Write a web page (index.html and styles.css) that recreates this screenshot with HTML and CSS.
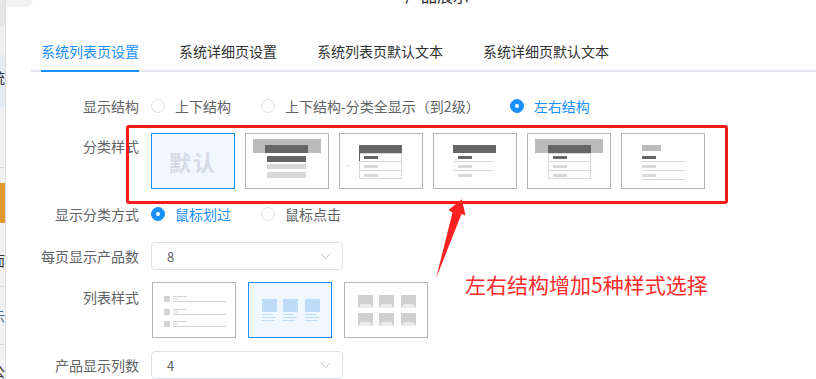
FILE: index.html
```html
<!DOCTYPE html>
<html lang="zh-CN">
<head>
<meta charset="utf-8">
<title>产品展示</title>
<link rel="stylesheet" href="styles.css">
</head>
<body>
<div class="app">
  <aside class="sidebar">
    <div class="sb sb-a"></div>
    <div class="sb sb-b"></div>
    <div class="sb sb-c"><span>系统</span></div>
    <div class="sb sb-d"></div>
    <div class="sb sb-e"></div>
    <div class="sb sb-f"></div>
    <div class="sb sb-g"><span>界面</span></div>
    <div class="sb sb-h"><span>展示</span></div>
    <div class="sb sb-i"><span>公</span></div>
  </aside>

  <main class="main">
    <header class="head">
      <div class="corner"></div>
      <div class="title">产品展示</div>
    </header>

    <nav class="tabs">
      <div class="tab active">系统列表页设置</div>
      <div class="tab">系统详细页设置</div>
      <div class="tab">系统列表页默认文本</div>
      <div class="tab">系统详细页默认文本</div>
    </nav>

    <div class="form">
      <div class="row row-1">
        <div class="label">显示结构</div>
        <div class="ctrl">
          <span class="radio"><i class="dot"></i>上下结构</span>
          <span class="radio"><i class="dot"></i>上下结构-分类全显示（到2级）</span>
          <span class="radio on"><i class="dot"></i>左右结构</span>
        </div>
      </div>

      <div class="row row-2">
        <div class="label">分类样式</div>
        <div class="ctrl thumbs">
          <div class="thumb sel"><span class="thumb-text">默认</span></div>
          <div class="thumb">
            <svg width="82" height="54" viewBox="0 0 82 54">
              <rect x="7" y="5" width="68" height="14" fill="#bbbbbb"/>
              <rect x="19" y="11" width="43" height="8" fill="#666666"/>
              <rect x="21" y="22" width="39" height="6" fill="#666666"/>
              <rect x="21" y="30" width="39" height="5" fill="#d9d9d9"/>
              <rect x="21" y="38" width="39" height="6" fill="#d9d9d9"/>
            </svg>
          </div>
          <div class="thumb">
            <svg width="82" height="54" viewBox="0 0 82 54">
              <rect x="19" y="11" width="43" height="8" fill="#666666"/>
              <rect x="19.5" y="19.5" width="42" height="25" fill="none" stroke="#d9d9d9"/>
              <line x1="19" y1="27.5" x2="62" y2="27.5" stroke="#d9d9d9"/>
              <line x1="19" y1="36.5" x2="62" y2="36.5" stroke="#d9d9d9"/>
              <rect x="19" y="19" width="1" height="8" fill="#666666"/>
              <rect x="24" y="22" width="14" height="3" fill="#666666"/>
              <rect x="24" y="31" width="14" height="3" fill="#d9d9d9"/>
              <rect x="24" y="40" width="14" height="3" fill="#d9d9d9"/>
              <rect x="7" y="31" width="1" height="1" fill="#bbbbbb"/>
            </svg>
          </div>
          <div class="thumb">
            <svg width="82" height="54" viewBox="0 0 82 54">
              <rect x="19" y="11" width="43" height="8" fill="#666666"/>
              <rect x="24" y="22" width="14" height="3" fill="#666666"/>
              <line x1="19" y1="27.5" x2="59" y2="27.5" stroke="#d9d9d9"/>
              <rect x="24" y="31" width="14" height="3" fill="#d9d9d9"/>
              <line x1="19" y1="36.5" x2="59" y2="36.5" stroke="#d9d9d9"/>
              <rect x="24" y="40" width="14" height="3" fill="#d9d9d9"/>
            </svg>
          </div>
          <div class="thumb">
            <svg width="82" height="54" viewBox="0 0 82 54">
              <rect x="7" y="5" width="68" height="14" fill="#bbbbbb"/>
              <rect x="20" y="11" width="43" height="8" fill="#666666"/>
              <rect x="20.5" y="19.5" width="42" height="25" fill="none" stroke="#d9d9d9"/>
              <line x1="20" y1="27.5" x2="63" y2="27.5" stroke="#d9d9d9"/>
              <line x1="20" y1="36.5" x2="63" y2="36.5" stroke="#d9d9d9"/>
              <rect x="25" y="22" width="14" height="3" fill="#666666"/>
              <rect x="25" y="31" width="14" height="3" fill="#d9d9d9"/>
              <rect x="25" y="40" width="14" height="3" fill="#d9d9d9"/>
            </svg>
          </div>
          <div class="thumb">
            <svg width="82" height="54" viewBox="0 0 82 54">
              <rect x="20" y="11" width="19" height="6" fill="#bbbbbb"/>
              <rect x="20" y="22" width="14" height="3" fill="#666666"/>
              <line x1="20" y1="27.5" x2="63" y2="27.5" stroke="#d9d9d9"/>
              <rect x="20" y="31" width="14" height="3" fill="#d9d9d9"/>
              <line x1="20" y1="36.5" x2="63" y2="36.5" stroke="#d9d9d9"/>
              <rect x="20" y="40" width="14" height="3" fill="#d9d9d9"/>
              <line x1="20" y1="45.5" x2="63" y2="45.5" stroke="#d9d9d9"/>
            </svg>
          </div>
        </div>
      </div>

      <div class="row row-3">
        <div class="label">显示分类方式</div>
        <div class="ctrl">
          <span class="radio on"><i class="dot"></i>鼠标划过</span>
          <span class="radio"><i class="dot"></i>鼠标点击</span>
        </div>
      </div>

      <div class="row row-4">
        <div class="label">每页显示产品数</div>
        <div class="ctrl">
          <div class="select">
            <span class="select-value">8</span>
            <svg class="chev" width="11" height="6" viewBox="0 0 11 6"><polyline points="0.5,0.5 5.5,5.5 10.5,0.5" fill="none" stroke="#c0c4cc" stroke-width="1"/></svg>
          </div>
        </div>
      </div>

      <div class="row row-5">
        <div class="label">列表样式</div>
        <div class="ctrl lists">
          <div class="thumb">
            <svg width="82" height="54" viewBox="0 0 82 54">
              <g fill="#d3d3d3">
                <rect x="11" y="13" width="6" height="6"/>
                <rect x="20" y="13" width="14" height="1"/>
                <rect x="20" y="15.5" width="5" height="1"/>
                <rect x="20" y="18" width="53" height="1"/>
                <rect x="11" y="26" width="6" height="6"/>
                <rect x="20" y="26" width="14" height="1"/>
                <rect x="20" y="28.5" width="5" height="1"/>
                <rect x="20" y="31" width="53" height="1"/>
                <rect x="11" y="38" width="6" height="6"/>
                <rect x="20" y="38" width="14" height="1"/>
                <rect x="20" y="40.5" width="5" height="1"/>
                <rect x="20" y="43" width="53" height="1"/>
              </g>
            </svg>
          </div>
          <div class="thumb sel">
            <svg width="82" height="54" viewBox="0 0 82 54">
              <g fill="#bcdcf7">
                <rect x="13" y="16" width="15" height="13"/>
                <rect x="34" y="16" width="15" height="13"/>
                <rect x="56" y="16" width="15" height="13"/>
                <rect x="13" y="31" width="11" height="1"/>
                <rect x="13" y="34" width="14" height="1"/>
                <rect x="13" y="37" width="12" height="1"/>
                <rect x="34" y="31" width="11" height="1"/>
                <rect x="34" y="34" width="14" height="1"/>
                <rect x="34" y="37" width="12" height="1"/>
                <rect x="56" y="31" width="11" height="1"/>
                <rect x="56" y="34" width="14" height="1"/>
                <rect x="56" y="37" width="12" height="1"/>
              </g>
            </svg>
          </div>
          <div class="thumb">
            <svg width="82" height="54" viewBox="0 0 82 54">
              <g fill="#d0d0d0">
                <rect x="13" y="12" width="15" height="13"/>
                <rect x="34" y="12" width="15" height="13"/>
                <rect x="56" y="12" width="15" height="13"/>
                <rect x="13" y="30" width="15" height="13"/>
                <rect x="34" y="30" width="15" height="13"/>
                <rect x="56" y="30" width="15" height="13"/>
              </g>
              <g fill="#ececec">
                <polygon points="16,21 25,21 28,25 13,25"/>
                <polygon points="37,21 46,21 49,25 34,25"/>
                <polygon points="59,21 68,21 71,25 56,25"/>
                <polygon points="16,39 25,39 28,43 13,43"/>
                <polygon points="37,39 46,39 49,43 34,43"/>
                <polygon points="59,39 68,39 71,43 56,43"/>
              </g>
            </svg>
          </div>
        </div>
      </div>

      <div class="row row-6">
        <div class="label">产品显示列数</div>
        <div class="ctrl">
          <div class="select">
            <span class="select-value">4</span>
            <svg class="chev" width="11" height="6" viewBox="0 0 11 6"><polyline points="0.5,0.5 5.5,5.5 10.5,0.5" fill="none" stroke="#c0c4cc" stroke-width="1"/></svg>
          </div>
        </div>
      </div>
    </div>
  </main>

  <div class="annot-box"></div>
  <svg class="annot-arrow" width="40" height="90" viewBox="0 0 40 90">
    <polygon points="6,83.5 22.5,17.5 18.5,15 31.8,4.2 35.5,20.5 31.5,19" fill="#ff2020"/>
  </svg>
  <div class="annot-text">左右结构增加5种样式选择</div>
</div>
</body>
</html>
```

FILE: styles.css
```css
* { box-sizing: border-box; }

html, body {
  margin: 0;
  padding: 0;
  background: #ffffff;
}

body {
  font-family: "Noto Sans CJK SC", "Microsoft YaHei", "Liberation Sans", sans-serif;
  font-size: 14px;
  color: #606266;
}

.app {
  position: relative;
  display: flex;
  width: 816px;
  height: 379px;
  overflow: hidden;
}

/* clipped sidebar on the left */
.sidebar {
  width: 6px;
  flex: none;
  display: flex;
  flex-direction: column;
  background: #f1f1f1;
  border-right: 1px solid #dedede;
  overflow: hidden;
}

.sb {
  display: flex;
  justify-content: flex-end;
  align-items: center;
  overflow: hidden;
  white-space: nowrap;
  font-size: 14px;
  color: #333;
  flex: none;
}

.sb span { flex: none; }

.sb-a { height: 27px; background: #e6e6e6; }
.sb-b { height: 28px; background: #f0f0f0; }
.sb-c { height: 52px; background: #e2eaf4; align-items: flex-start; padding-top: 12px; }
.sb-d { height: 61px; border-bottom: 1px solid #d9d9d9; }
.sb-e { height: 15px; }
.sb-f { height: 40px; background: #e09a30; }
.sb-g { height: 64px; border-bottom: 1px solid #d9d9d9; padding-top: 27px; align-items: flex-start; }
.sb-h { height: 58px; border-bottom: 1px solid #d9d9d9; color: #4a6d95; }
.sb-i { flex: 1; align-items: flex-start; padding-top: 16px; }

/* main */
.main {
  flex: 1;
  position: relative;
  padding-left: 25px;
}

.head {
  height: 32px;
  margin-left: -25px;
}

.corner {
  width: 27px;
  height: 7px;
  background: #f3f3f4;
  border-bottom-right-radius: 8px;
}

.title {
  margin-top: -23px;
  padding-left: 52px;
  text-align: center;
  font-size: 16px;
  line-height: 22px;
  color: #303133;
}

.tabs {
  display: flex;
  padding-left: 10px;
  border-bottom: 2px solid #e4e7ed;
  height: 40px;
}

.tab {
  height: 40px;
  line-height: 38px;
  margin-right: 40px;
  margin-bottom: -2px;
  border-bottom: 2px solid transparent;
  font-size: 14px;
  color: #303133;
  white-space: nowrap;
}

.tab.active {
  color: #1890ff;
  border-bottom-color: #1890ff;
}

/* form */
.form {
  display: flex;
  flex-direction: column;
}

.row {
  display: flex;
  align-items: flex-start;
}

.label {
  width: 120px;
  flex: none;
  padding-right: 12px;
  text-align: right;
  line-height: 40px;
  font-size: 14px;
  color: #606266;
  white-space: nowrap;
}

.ctrl {
  display: flex;
  align-items: center;
  min-height: 40px;
}

.row-1 { margin-top: 14px; }
.row-4 { margin-top: 2px; }
.row-5 { margin-top: 1px; }

.radio {
  display: inline-flex;
  align-items: center;
  margin-right: 30px;
  font-size: 14px;
  line-height: 40px;
  color: #606266;
  white-space: nowrap;
}

.dot {
  width: 14px;
  height: 14px;
  border: 1px solid #dcdfe6;
  border-radius: 50%;
  margin-right: 10px;
  background: #fff;
  display: flex;
  align-items: center;
  justify-content: center;
}

.radio.on { color: #1890ff; }

.radio.on .dot {
  background: #1890ff;
  border-color: #1890ff;
}

.radio.on .dot::after {
  content: "";
  width: 4px;
  height: 4px;
  border-radius: 50%;
  background: #fff;
}

.thumbs {
  padding: 7px 0 5px;
  gap: 10px;
}

.lists {
  padding: 5px 0 7px 1px;
  gap: 12px;
}

.thumb {
  width: 84px;
  height: 56px;
  border: 1px solid #b3b3b3;
  background: #fff;
  display: flex;
  align-items: center;
  justify-content: center;
  flex: none;
}

.thumb svg { display: block; }

.thumb.sel {
  border-color: #1890ff;
  background: #f0f7ff;
}

.thumb-text {
  font-size: 22px;
  font-weight: bold;
  color: #d4dbe5;
  letter-spacing: 2px;
  line-height: 1;
}

.select {
  width: 192px;
  height: 28px;
  border: 1px solid #dcdfe6;
  border-radius: 4px;
  display: flex;
  align-items: center;
  justify-content: space-between;
  padding: 0 11px 0 15px;
  background: #fff;
}

.select-value {
  font-size: 13px;
  color: #606266;
}

.chev { display: block; }

/* annotations drawn over the screenshot */
.annot-box {
  position: absolute;
  left: 126px;
  top: 125px;
  width: 602px;
  height: 79px;
  border: 3px solid #ff1a1a;
  border-radius: 3px;
}

.annot-arrow {
  position: absolute;
  left: 430px;
  top: 195px;
}

.annot-text {
  position: absolute;
  left: 465px;
  top: 272px;
  font-size: 21px;
  line-height: 24px;
  color: #ff2a2a;
  white-space: nowrap;
}
```
